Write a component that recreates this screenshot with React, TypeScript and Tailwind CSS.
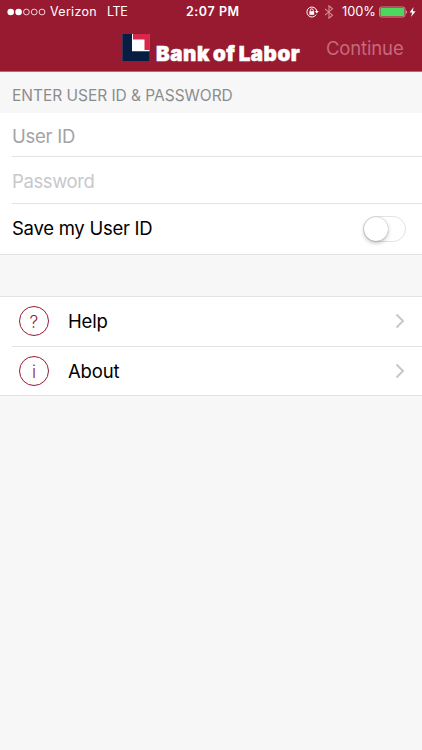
import { useState } from 'react';

export default function App() {
  const [saveId, setSaveId] = useState(false);

  return (
    <div className="flex flex-col w-[422px] h-[750px] bg-[#f7f7f7] font-['Inter','Liberation_Sans',sans-serif] text-black overflow-hidden">
      <header className="h-[72px] bg-[#981a31] border-b border-[#b46b7a] text-white">
        <StatusBar />
        <NavBar />
      </header>

      <h2 className="h-[41px] pt-[14px] pl-3 text-[15.5px] leading-[20px] tracking-[-0.03px] text-[#8c8c8f] whitespace-nowrap">
        ENTER USER ID &amp; PASSWORD
      </h2>

      <section className="bg-white border-b border-[#e3e3e5]">
        <div className="ml-3 h-11 border-b border-[#e3e3e5] flex items-center">
          <input
            type="text"
            placeholder="User ID"
            className="w-full pt-[3px] text-[18.5px] leading-6 tracking-[-0.25px] outline-none placeholder:text-[#a3a3a5]"
          />
        </div>
        <div className="ml-3 h-[47px] border-b border-[#e3e3e5] flex items-center">
          <input
            type="password"
            placeholder="Password"
            className="w-full pt-[2px] text-[18.5px] leading-6 tracking-[-0.4px] outline-none placeholder:text-[#c8c8cc]"
          />
        </div>
        <div className="h-[50px] pl-3 pr-4 flex items-center justify-between">
          <span className="pb-[2px] text-[18.5px] leading-6 tracking-[-0.27px]">Save my User ID</span>
          <Toggle checked={saveId} onChange={setSaveId} />
        </div>
      </section>

      <nav className="mt-[41px] bg-white border-y border-[#e3e3e5]">
        <MenuRow label="Help" glyph="?" />
        <div className="ml-3 h-px bg-[#e3e3e5]" />
        <MenuRow label="About" glyph="i" />
      </nav>
    </div>
  );
}

function StatusBar() {
  return (
    <div className="h-6 flex items-center text-[12.5px] leading-none">
      <svg className="ml-[7px] w-[39px] h-2" viewBox="0 0 39 8" fill="none" stroke="white">
        <circle cx="3.7" cy="4" r="3.3" fill="white" stroke="none" />
        <circle cx="11.6" cy="4" r="3.3" fill="white" stroke="none" />
        <circle cx="19.4" cy="4" r="2.9" strokeWidth="0.8" />
        <circle cx="27.2" cy="4" r="2.9" strokeWidth="0.8" />
        <circle cx="35" cy="4" r="2.9" strokeWidth="0.8" />
      </svg>
      <span className="w-[57px] pl-1 tracking-[0.3px]">Verizon</span>
      <span className="w-[79px] pl-1 tracking-[-0.3px]">LTE</span>
      <span className="w-[123px] pl-1 font-semibold tracking-[0.55px] whitespace-nowrap">2:07 PM</span>
      <svg className="w-[14px] h-[14px]" viewBox="0 0 14 14" fill="none" stroke="white">
        <path d="M11.2 9.6A5 5 0 1 1 11.8 6" strokeWidth="1" />
        <path d="M9.9 6h3.8l-1.9 2.4z" fill="white" stroke="none" />
        <rect x="4.4" y="6.2" width="4.8" height="3.6" fill="white" stroke="none" />
        <path d="M5.4 6.4V5.2a1.4 1.4 0 0 1 2.8 0v1.2" strokeWidth="0.9" />
      </svg>
      <svg className="ml-[5px] w-[10px] h-[14px]" viewBox="0 0 10 14" fill="none" stroke="#d38d9a" strokeWidth="1.1">
        <path d="M1 3.8l7.5 6.4L5 13.2V.8l3.5 3L1 10.2" />
      </svg>
      <span className="ml-2 w-[37px] text-[12.8px] whitespace-nowrap">100%</span>
      <svg className="w-[40px] h-[12px]" viewBox="0 0 40 12">
        <rect x="0.5" y="1" width="25.5" height="10" rx="2" fill="#981a31" stroke="#dba0ab" strokeWidth="0.8" />
        <rect x="1.4" y="1.9" width="23.7" height="8.2" rx="1.2" fill="#4cd75f" />
        <path d="M26.8 4.2c1.3.3 1.3 3.3 0 3.6z" fill="#f0cdd3" />
        <path d="M34.6 1L30.6 6.5h2.6L32 11 36.6 5.3h-2.8z" fill="white" />
      </svg>
    </div>
  );
}

function NavBar() {
  return (
    <div className="h-[47px] flex items-center">
      <svg className="ml-[122px] w-[28px] h-[27px]" viewBox="0 0 28 27">
        <rect width="28" height="27" fill="#071e42" />
        <rect x="10" width="18" height="17" fill="#d8274a" />
        <path d="M10 0h1v5.5h11.5v10.5H27.5v1.2H10z" fill="white" />
        <path d="M.25 0v27M27.75 0v27" stroke="#a05a76" strokeWidth="0.5" />
      </svg>
      <span className="ml-[6px] w-[170px] pt-[12px] text-[20.5px] leading-6 font-black tracking-[0.55px] [word-spacing:-1.5px] [-webkit-text-stroke:0.5px_white] whitespace-nowrap">
        Bank of Labor
      </span>
      <button type="button" disabled className="text-[18.5px] leading-6 tracking-[-0.15px] text-[#c46b7c]">
        Continue
      </button>
    </div>
  );
}

function Toggle({ checked, onChange }: {
  checked: boolean;
  onChange: (value: boolean) => void;
}) {
  return (
    <button
      type="button"
      role="switch"
      aria-checked={checked}
      onClick={() => onChange(!checked)}
      className={`w-[43px] h-[26px] rounded-full border flex ${checked ? 'justify-end bg-[#4cd75f] border-[#4cd75f]' : 'bg-white border-[#e3e3e5]'}`}
    >
      <span className="w-6 h-6 rounded-full bg-white shadow-[0_2px_4px_rgba(0,0,0,0.25),0_0_1px_rgba(0,0,0,0.4)]" />
    </button>
  );
}

function MenuRow({ label, glyph }: { label: string; glyph: string }) {
  return (
    <a className="h-[48.5px] pl-[19px] pr-[17px] flex items-center">
      <span className="w-[30px] h-[30px] rounded-full border-[1.3px] border-[#981a31] flex items-center justify-center pt-px text-[17.5px] leading-none font-light text-[#981a31]">
        {glyph}
      </span>
      <span className="ml-[19px] flex-1 text-[18.5px] leading-6 tracking-[-0.15px]">{label}</span>
      <svg className="w-[10px] h-4" viewBox="0 0 10 16" fill="none" stroke="#c7c7cc" strokeWidth="2">
        <path d="M1.5 1.5L8 8l-6.5 6.5" />
      </svg>
    </a>
  );
}
